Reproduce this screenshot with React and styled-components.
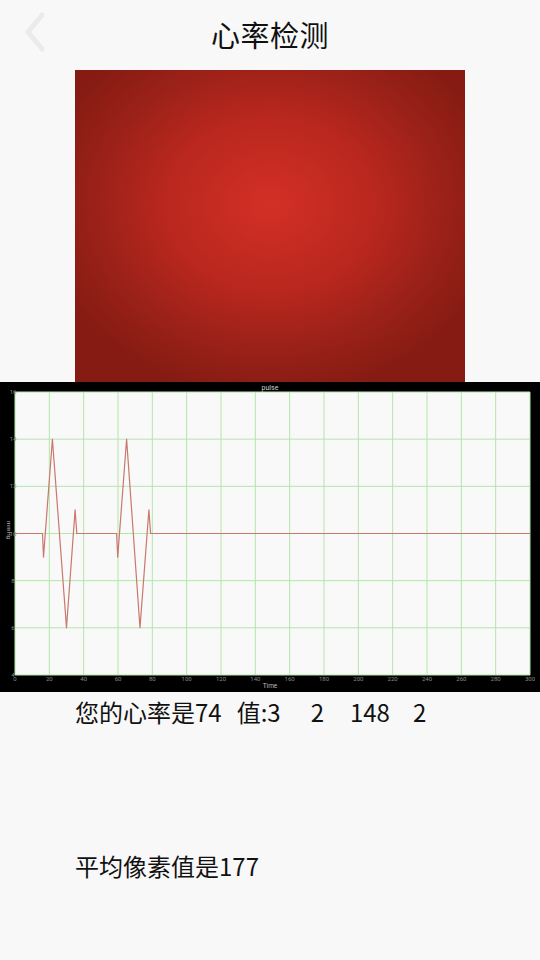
import React from 'react'
import styled, { createGlobalStyle } from 'styled-components'

const GlobalStyle = createGlobalStyle`
  html, body {
    margin: 0;
    padding: 0;
    background: #f8f8f8;
  }
  body {
    font-family: "Noto Sans CJK SC", "Noto Sans", sans-serif;
    color: #111;
  }
`

const Page = styled.div`
  width: 540px;
  min-height: 960px;
  display: flex;
  flex-direction: column;
  background: #f8f8f8;
`

const Header = styled.div`
  height: 70px;
  display: grid;
  grid-template-columns: 70px 1fr 70px;
  align-items: center;
`

const BackButton = styled.div`
  display: flex;
  align-items: center;
  justify-content: center;
  height: 70px;
  margin-top: -6px;
`

const Title = styled.h1`
  margin: 0;
  margin-top: -2px;
  text-align: center;
  font-size: 29px;
  font-weight: 400;
  letter-spacing: 0.5px;
  color: #111;
`

const Preview = styled.div`
  margin: 0 75px;
  height: 312px;
  background: radial-gradient(ellipse 60% 62% at 50% 43%, #d33026 0%, #b9271e 45%, #9a2118 75%, #851b13 100%);
`

const ChartBox = styled.div`
  height: 310px;
  background: #000;
  svg {
    display: block;
  }
`

const Info = styled.div`
  padding-left: 75px;
  display: flex;
  flex-direction: column;
  gap: ${p => p.gap}px;
  margin-top: 3px;
`

const Line = styled.div`
  font-size: 24px;
  line-height: 34px;
  white-space: pre;
  color: #111;
`

const Value = styled.span`
  margin-left: ${p => p.gap}px;
`

const PL = 15
const PR = 530
const PT = 10
const PB = 293
const px = u => PL + (u * (PR - PL)) / 300
const py = v => PT + ((16 - v) * (PB - PT)) / 12

const wave = [
  [0, 10], [16, 10], [16.6, 9], [21.8, 14], [30, 6], [35, 11], [36, 10],
  [59.2, 10], [59.8, 9], [65, 14], [72.8, 6], [78, 11], [79, 10], [300, 10]
]

function PulseChart() {
  const xs = Array.from({ length: 16 }, (_, i) => i * 20)
  const ys = [4, 6, 8, 10, 12, 14, 16]
  const pts = wave.map(([u, v]) => `${px(u).toFixed(1)},${py(v).toFixed(1)}`).join(' ')
  return (
    <svg width="540" height="310" viewBox="0 0 540 310">
      <text x="270" y="8" fontSize="7" fill="#cfcfcf" textAnchor="middle" fontFamily="Roboto, sans-serif">pulse</text>
      <rect x={PL} y={PT} width={PR - PL} height={PB - PT} fill="#f9f9f9" />
      {xs.map(u => (
        <line key={'vx' + u} x1={px(u)} x2={px(u)} y1={PT} y2={PB} stroke="#b4e6aa" strokeWidth="1" />
      ))}
      {ys.map(v => (
        <line key={'hy' + v} x1={PL} x2={PR} y1={py(v)} y2={py(v)} stroke="#b4e6aa" strokeWidth="1" />
      ))}
      <polyline points={pts} fill="none" stroke="#c8786c" strokeWidth="1.2" strokeLinejoin="round" />
      {ys.map(v => (
        <text key={'ly' + v} x="13" y={py(v) + 2} fontSize="6" fill="#8a8a8a" textAnchor="middle" fontFamily="Roboto, sans-serif">{v}</text>
      ))}
      {xs.map(u => (
        <text key={'lx' + u} x={px(u)} y="299" fontSize="6" fill="#8a8a8a" textAnchor="middle" fontFamily="Roboto, sans-serif">{u}</text>
      ))}
      <text x="270" y="306" fontSize="6.5" fill="#bbbbbb" textAnchor="middle" fontFamily="Roboto, sans-serif">Time</text>
      <text x="0" y="0" fontSize="6" fill="#bbbbbb" textAnchor="middle" fontFamily="Roboto, sans-serif" transform="translate(7 148) rotate(90)">mmHg</text>
    </svg>
  )
}

export default function App() {
  return (
    <Page>
      <GlobalStyle />
      <Header>
        <BackButton>
          <svg width="24" height="40" viewBox="0 0 24 40">
            <polyline points="19,3 5,20 19,37" fill="none" stroke="#ebebeb" strokeWidth="5" strokeLinecap="round" strokeLinejoin="round" />
          </svg>
        </BackButton>
        <Title>心率检测</Title>
        <div />
      </Header>
      <Preview />
      <ChartBox>
        <PulseChart />
      </ChartBox>
      <Info gap={120}>
        <Line>
          您的心率是74
          <Value gap={15}>值:3</Value>
          <Value gap={30}>2</Value>
          <Value gap={26}>148</Value>
          <Value gap={23}>2</Value>
        </Line>
        <Line>平均像素值是177</Line>
      </Info>
    </Page>
  )
}
